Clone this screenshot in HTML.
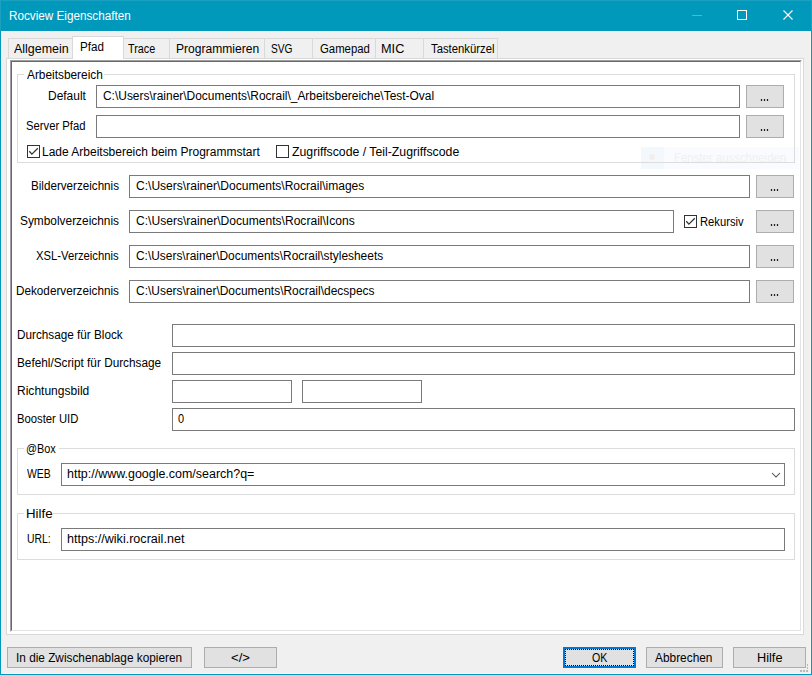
<!DOCTYPE html>
<html><head><meta charset="utf-8"><style>
html,body{margin:0;padding:0;width:812px;height:675px;overflow:hidden;background:#f0f0f0}
.b{position:absolute;box-sizing:border-box}
.t{position:absolute;font-family:"Liberation Sans",sans-serif;font-size:12px;line-height:15px;white-space:nowrap;transform-origin:0 0;color:#000}
</style></head><body>
<div class="b" style="left:0px;top:0px;width:812px;height:675px;background:#0099bc;"></div>
<div class="b" style="left:0px;top:0px;width:812px;height:1px;background:#1aa0c1;"></div>
<div class="b" style="left:0px;top:0px;width:1px;height:31px;background:#1aa0c1;"></div>
<div class="b" style="left:811px;top:0px;width:1px;height:31px;background:#1aa0c1;"></div>
<div class="b" style="left:1px;top:31px;width:810px;height:643px;background:#fcf6f4;"></div>
<div class="b" style="left:2px;top:32px;width:808px;height:641px;background:#f0f0f0;"></div>
<div class="b" style="left:692px;top:15px;width:10px;height:1px;background:#4db8d0;"></div>
<div class="b" style="left:737px;top:10px;width:10px;height:10px;border:1px solid #fff;border-width:1px;"></div>
<svg class="b" style="left:0;top:0" width="812" height="31"><path d="M783.5 10.5 L792.5 19.5 M792.5 10.5 L783.5 19.5" stroke="#fff" stroke-width="1.1" fill="none"/></svg>
<div class="b" style="left:8px;top:38px;width:65px;height:21px;border:1px solid #d9d9d9;background:#f0f0f0;border-bottom:none;"></div>
<div class="b" style="left:123px;top:38px;width:47px;height:21px;border:1px solid #d9d9d9;background:#f0f0f0;border-bottom:none;"></div>
<div class="b" style="left:169px;top:38px;width:96px;height:21px;border:1px solid #d9d9d9;background:#f0f0f0;border-bottom:none;"></div>
<div class="b" style="left:264px;top:38px;width:49px;height:21px;border:1px solid #d9d9d9;background:#f0f0f0;border-bottom:none;"></div>
<div class="b" style="left:312px;top:38px;width:64px;height:21px;border:1px solid #d9d9d9;background:#f0f0f0;border-bottom:none;"></div>
<div class="b" style="left:375px;top:38px;width:49px;height:21px;border:1px solid #d9d9d9;background:#f0f0f0;border-bottom:none;"></div>
<div class="b" style="left:423px;top:38px;width:75px;height:21px;border:1px solid #d9d9d9;background:#f0f0f0;border-bottom:none;"></div>
<div class="b" style="left:6px;top:58px;width:798px;height:577px;border:1px solid #d9d9d9;background:#fff;"></div>
<div class="b" style="left:72px;top:36px;width:52px;height:23px;border:1px solid #d9d9d9;background:#fff;border-bottom:none;"></div>
<div class="b" style="left:10px;top:60px;width:792px;height:572px;border-style:solid;border-width:1px;border-color:#a0a0a0 #fff #fff #a0a0a0;"></div>
<div class="b" style="left:11px;top:61px;width:790px;height:570px;border-style:solid;border-width:1px;border-color:#696969 #e3e3e3 #e3e3e3 #696969;"></div>
<div class="b" style="left:641px;top:147px;width:158px;height:22px;background:#f9fbfe;"></div>
<div class="b" style="left:641px;top:147px;width:23px;height:22px;background:#f3f8fd;"></div>
<div class="b" style="left:649px;top:154px;width:6px;height:6px;border-radius:3px;background:#f1eeee"></div>
<div class="t" style="left:673.5px;top:151px;color:#eff1f3;transform:scaleX(0.95)">Fenster ausschneiden</div>
<div class="b" style="left:17px;top:74px;width:778px;height:89px;border:1px solid #dcdcdc;"></div>
<div class="b" style="left:24px;top:74px;width:80px;height:1px;background:#fff;"></div>
<div class="b" style="left:17px;top:448px;width:778px;height:47px;border:1px solid #dcdcdc;"></div>
<div class="b" style="left:24px;top:448px;width:35px;height:1px;background:#fff;"></div>
<div class="b" style="left:17px;top:513px;width:778px;height:47px;border:1px solid #dcdcdc;"></div>
<div class="b" style="left:24px;top:513px;width:29px;height:1px;background:#fff;"></div>
<div class="b" style="left:96px;top:85px;width:644px;height:23px;border:1px solid #7a7a7a;background:#fff;"></div>
<div class="b" style="left:746px;top:85px;width:38px;height:23px;border:1px solid #adadad;background:#e1e1e1;"></div>
<div class="b" style="left:96px;top:115px;width:644px;height:23px;border:1px solid #7a7a7a;background:#fff;"></div>
<div class="b" style="left:746px;top:115px;width:38px;height:23px;border:1px solid #adadad;background:#e1e1e1;"></div>
<div class="b" style="left:27px;top:145px;width:13px;height:13px;border:1px solid #333;background:#fff;"></div>
<svg class="b" style="left:27px;top:145px" width="13" height="13"><polyline points="2.3,6.3 4.9,9.1 10.8,3.2" stroke="#333" stroke-width="1.3" fill="none"/></svg>
<div class="b" style="left:276px;top:145px;width:13px;height:13px;border:1px solid #333;background:#fff;"></div>
<div class="b" style="left:129px;top:175px;width:621px;height:23px;border:1px solid #7a7a7a;background:#fff;"></div>
<div class="b" style="left:756px;top:175px;width:38px;height:23px;border:1px solid #adadad;background:#e1e1e1;"></div>
<div class="b" style="left:129px;top:245px;width:621px;height:23px;border:1px solid #7a7a7a;background:#fff;"></div>
<div class="b" style="left:756px;top:245px;width:38px;height:23px;border:1px solid #adadad;background:#e1e1e1;"></div>
<div class="b" style="left:129px;top:280px;width:621px;height:23px;border:1px solid #7a7a7a;background:#fff;"></div>
<div class="b" style="left:756px;top:280px;width:38px;height:23px;border:1px solid #adadad;background:#e1e1e1;"></div>
<div class="b" style="left:129px;top:210px;width:545px;height:23px;border:1px solid #7a7a7a;background:#fff;"></div>
<div class="b" style="left:756px;top:210px;width:38px;height:23px;border:1px solid #adadad;background:#e1e1e1;"></div>
<div class="b" style="left:684px;top:215px;width:13px;height:13px;border:1px solid #333;background:#fff;"></div>
<svg class="b" style="left:684px;top:215px" width="13" height="13"><polyline points="2.3,6.3 4.9,9.1 10.8,3.2" stroke="#333" stroke-width="1.3" fill="none"/></svg>
<div class="b" style="left:172px;top:324px;width:623px;height:23px;border:1px solid #7a7a7a;background:#fff;"></div>
<div class="b" style="left:172px;top:352px;width:623px;height:23px;border:1px solid #7a7a7a;background:#fff;"></div>
<div class="b" style="left:172px;top:380px;width:120px;height:23px;border:1px solid #7a7a7a;background:#fff;"></div>
<div class="b" style="left:302px;top:380px;width:120px;height:23px;border:1px solid #7a7a7a;background:#fff;"></div>
<div class="b" style="left:172px;top:408px;width:623px;height:23px;border:1px solid #7a7a7a;background:#fff;"></div>
<div class="b" style="left:61px;top:463px;width:724px;height:23px;border:1px solid #7a7a7a;background:#fff;"></div>
<svg class="b" style="left:766px;top:464px" width="20" height="20"><polyline points="6,9 10,13 14,9" stroke="#444" stroke-width="1.05" fill="none"/></svg>
<div class="b" style="left:61px;top:528px;width:724px;height:23px;border:1px solid #7a7a7a;background:#fff;"></div>
<div class="b" style="left:7px;top:647px;width:185px;height:21px;border:1px solid #adadad;background:#e1e1e1;"></div>
<div class="b" style="left:204px;top:647px;width:73px;height:21px;border:1px solid #adadad;background:#e1e1e1;"></div>
<div class="b" style="left:563px;top:647px;width:73px;height:21px;border:1px solid #0078d7;background:#e1e1e1;border-width:2px;"></div>
<div class="b" style="left:565px;top:649px;width:69px;height:17px;border:1px dotted #000;"></div>
<div class="b" style="left:646px;top:647px;width:77px;height:21px;border:1px solid #adadad;background:#e1e1e1;"></div>
<div class="b" style="left:733px;top:647px;width:73px;height:21px;border:1px solid #adadad;background:#e1e1e1;"></div>
<div class="b" style="left:807px;top:664px;width:1px;height:2px;background:#b9b9b9;"></div>
<div class="b" style="left:807px;top:667px;width:1px;height:2px;background:#b9b9b9;"></div>
<div class="b" style="left:800px;top:670px;width:2px;height:2px;background:#b9b9b9;"></div>
<div class="b" style="left:803px;top:670px;width:2px;height:2px;background:#b9b9b9;"></div>
<div class="b" style="left:806px;top:670px;width:2px;height:2px;background:#b9b9b9;"></div>
<div class="t" style="left:9.02px;top:9px;color:#fff;transform:scaleX(0.9756)">Rocview Eigenschaften</div>
<div class="t" style="left:14.00px;top:42px;color:#000;transform:scaleX(1.0385)">Allgemein</div>
<div class="t" style="left:80.03px;top:40px;color:#000;transform:scaleX(0.9696)">Pfad</div>
<div class="t" style="left:128.00px;top:42px;color:#000;transform:scaleX(0.9000)">Trace</div>
<div class="t" style="left:175.99px;top:42px;color:#000;transform:scaleX(1.0062)">Programmieren</div>
<div class="t" style="left:270.55px;top:42px;color:#000;transform:scaleX(0.8500)">SVG</div>
<div class="t" style="left:319.80px;top:42px;color:#000;transform:scaleX(0.9462)">Gamepad</div>
<div class="t" style="left:381.34px;top:42px;color:#000;transform:scaleX(1.0600)">MIC</div>
<div class="t" style="left:430.70px;top:42px;color:#000;transform:scaleX(0.9418)">Tastenkürzel</div>
<div class="t" style="left:26.60px;top:68px;color:#000;transform:scaleX(0.9882)">Arbeitsbereich</div>
<div class="t" style="left:47.80px;top:89px;color:#000;transform:scaleX(0.9973)">Default</div>
<div class="t" style="left:102.70px;top:89px;color:#000;transform:scaleX(0.9949)">C:\Users\rainer\Documents\Rocrail\_Arbeitsbereiche\Test-Oval</div>
<div class="t" style="left:26.46px;top:119px;color:#000;transform:scaleX(0.9387)">Server Pfad</div>
<div class="t" style="left:42.00px;top:145px;color:#000;transform:scaleX(0.9986)">Lade Arbeitsbereich beim Programmstart</div>
<div class="t" style="left:292.00px;top:145px;color:#000;transform:scaleX(1.0233)">Zugriffscode / Teil-Zugriffscode</div>
<div class="t" style="left:30.73px;top:179px;color:#000;transform:scaleX(0.9700)">Bilderverzeichnis</div>
<div class="t" style="left:135.60px;top:179px;color:#000;transform:scaleX(1.0040)">C:\Users\rainer\Documents\Rocrail\images</div>
<div class="t" style="left:20.01px;top:214px;color:#000;transform:scaleX(0.9899)">Symbolverzeichnis</div>
<div class="t" style="left:135.60px;top:214px;color:#000;transform:scaleX(1.0060)">C:\Users\rainer\Documents\Rocrail\Icons</div>
<div class="t" style="left:700.07px;top:215px;color:#000;transform:scaleX(0.9348)">Rekursiv</div>
<div class="t" style="left:36.40px;top:249px;color:#000;transform:scaleX(0.9386)">XSL-Verzeichnis</div>
<div class="t" style="left:135.60px;top:249px;color:#000;transform:scaleX(0.9936)">C:\Users\rainer\Documents\Rocrail\stylesheets</div>
<div class="t" style="left:16.42px;top:284px;color:#000;transform:scaleX(0.9769)">Dekoderverzeichnis</div>
<div class="t" style="left:135.60px;top:284px;color:#000;transform:scaleX(0.9962)">C:\Users\rainer\Documents\Rocrail\decspecs</div>
<div class="t" style="left:17.12px;top:328px;color:#000;transform:scaleX(0.9785)">Durchsage für Block</div>
<div class="t" style="left:17.12px;top:356px;color:#000;transform:scaleX(0.9822)">Befehl/Script für Durchsage</div>
<div class="t" style="left:17.10px;top:384px;color:#000;transform:scaleX(1.0028)">Richtungsbild</div>
<div class="t" style="left:17.16px;top:412px;color:#000;transform:scaleX(0.9391)">Booster UID</div>
<div class="t" style="left:178.20px;top:412px;color:#000;transform:scaleX(0.9143)">0</div>
<div class="t" style="left:26.09px;top:442px;color:#000;transform:scaleX(0.9062)">@Box</div>
<div class="t" style="left:27.20px;top:467px;color:#000;transform:scaleX(0.8667)">WEB</div>
<div class="t" style="left:66.76px;top:467px;color:#000;transform:scaleX(1.0385)">http://www.google.com/search?q=</div>
<div class="t" style="left:25.50px;top:507px;color:#000;transform:scaleX(1.1043)">Hilfe</div>
<div class="t" style="left:26.63px;top:532px;color:#000;transform:scaleX(0.8654)">URL:</div>
<div class="t" style="left:66.65px;top:532px;color:#000;transform:scaleX(1.0477)">https://wiki.rocrail.net</div>
<div class="t" style="left:16.12px;top:651px;color:#000;transform:scaleX(0.9838)">In die Zwischenablage kopieren</div>
<div class="t" style="left:230.80px;top:651px;color:#000;transform:scaleX(1.0882)">&lt;/&gt;</div>
<div class="t" style="left:591.70px;top:651px;color:#000;transform:scaleX(0.8824)">OK</div>
<div class="t" style="left:655.00px;top:651px;color:#000;transform:scaleX(0.9897)">Abbrechen</div>
<div class="t" style="left:756.64px;top:651px;color:#000;transform:scaleX(1.0609)">Hilfe</div>
<div class="b" style="left:760px;top:99px;width:3px;height:2px;background:#c8c8c8;"></div>
<div class="b" style="left:761px;top:99px;width:1px;height:2px;background:#1e1e1e;"></div>
<div class="b" style="left:763px;top:99px;width:3px;height:2px;background:#c8c8c8;"></div>
<div class="b" style="left:764px;top:99px;width:1px;height:2px;background:#1e1e1e;"></div>
<div class="b" style="left:766px;top:99px;width:3px;height:2px;background:#c8c8c8;"></div>
<div class="b" style="left:767px;top:99px;width:1px;height:2px;background:#1e1e1e;"></div>
<div class="b" style="left:760px;top:129px;width:3px;height:2px;background:#c8c8c8;"></div>
<div class="b" style="left:761px;top:129px;width:1px;height:2px;background:#1e1e1e;"></div>
<div class="b" style="left:763px;top:129px;width:3px;height:2px;background:#c8c8c8;"></div>
<div class="b" style="left:764px;top:129px;width:1px;height:2px;background:#1e1e1e;"></div>
<div class="b" style="left:766px;top:129px;width:3px;height:2px;background:#c8c8c8;"></div>
<div class="b" style="left:767px;top:129px;width:1px;height:2px;background:#1e1e1e;"></div>
<div class="b" style="left:770px;top:189px;width:3px;height:2px;background:#c8c8c8;"></div>
<div class="b" style="left:771px;top:189px;width:1px;height:2px;background:#1e1e1e;"></div>
<div class="b" style="left:773px;top:189px;width:3px;height:2px;background:#c8c8c8;"></div>
<div class="b" style="left:774px;top:189px;width:1px;height:2px;background:#1e1e1e;"></div>
<div class="b" style="left:776px;top:189px;width:3px;height:2px;background:#c8c8c8;"></div>
<div class="b" style="left:777px;top:189px;width:1px;height:2px;background:#1e1e1e;"></div>
<div class="b" style="left:770px;top:224px;width:3px;height:2px;background:#c8c8c8;"></div>
<div class="b" style="left:771px;top:224px;width:1px;height:2px;background:#1e1e1e;"></div>
<div class="b" style="left:773px;top:224px;width:3px;height:2px;background:#c8c8c8;"></div>
<div class="b" style="left:774px;top:224px;width:1px;height:2px;background:#1e1e1e;"></div>
<div class="b" style="left:776px;top:224px;width:3px;height:2px;background:#c8c8c8;"></div>
<div class="b" style="left:777px;top:224px;width:1px;height:2px;background:#1e1e1e;"></div>
<div class="b" style="left:770px;top:259px;width:3px;height:2px;background:#c8c8c8;"></div>
<div class="b" style="left:771px;top:259px;width:1px;height:2px;background:#1e1e1e;"></div>
<div class="b" style="left:773px;top:259px;width:3px;height:2px;background:#c8c8c8;"></div>
<div class="b" style="left:774px;top:259px;width:1px;height:2px;background:#1e1e1e;"></div>
<div class="b" style="left:776px;top:259px;width:3px;height:2px;background:#c8c8c8;"></div>
<div class="b" style="left:777px;top:259px;width:1px;height:2px;background:#1e1e1e;"></div>
<div class="b" style="left:770px;top:294px;width:3px;height:2px;background:#c8c8c8;"></div>
<div class="b" style="left:771px;top:294px;width:1px;height:2px;background:#1e1e1e;"></div>
<div class="b" style="left:773px;top:294px;width:3px;height:2px;background:#c8c8c8;"></div>
<div class="b" style="left:774px;top:294px;width:1px;height:2px;background:#1e1e1e;"></div>
<div class="b" style="left:776px;top:294px;width:3px;height:2px;background:#c8c8c8;"></div>
<div class="b" style="left:777px;top:294px;width:1px;height:2px;background:#1e1e1e;"></div>
</body></html>
